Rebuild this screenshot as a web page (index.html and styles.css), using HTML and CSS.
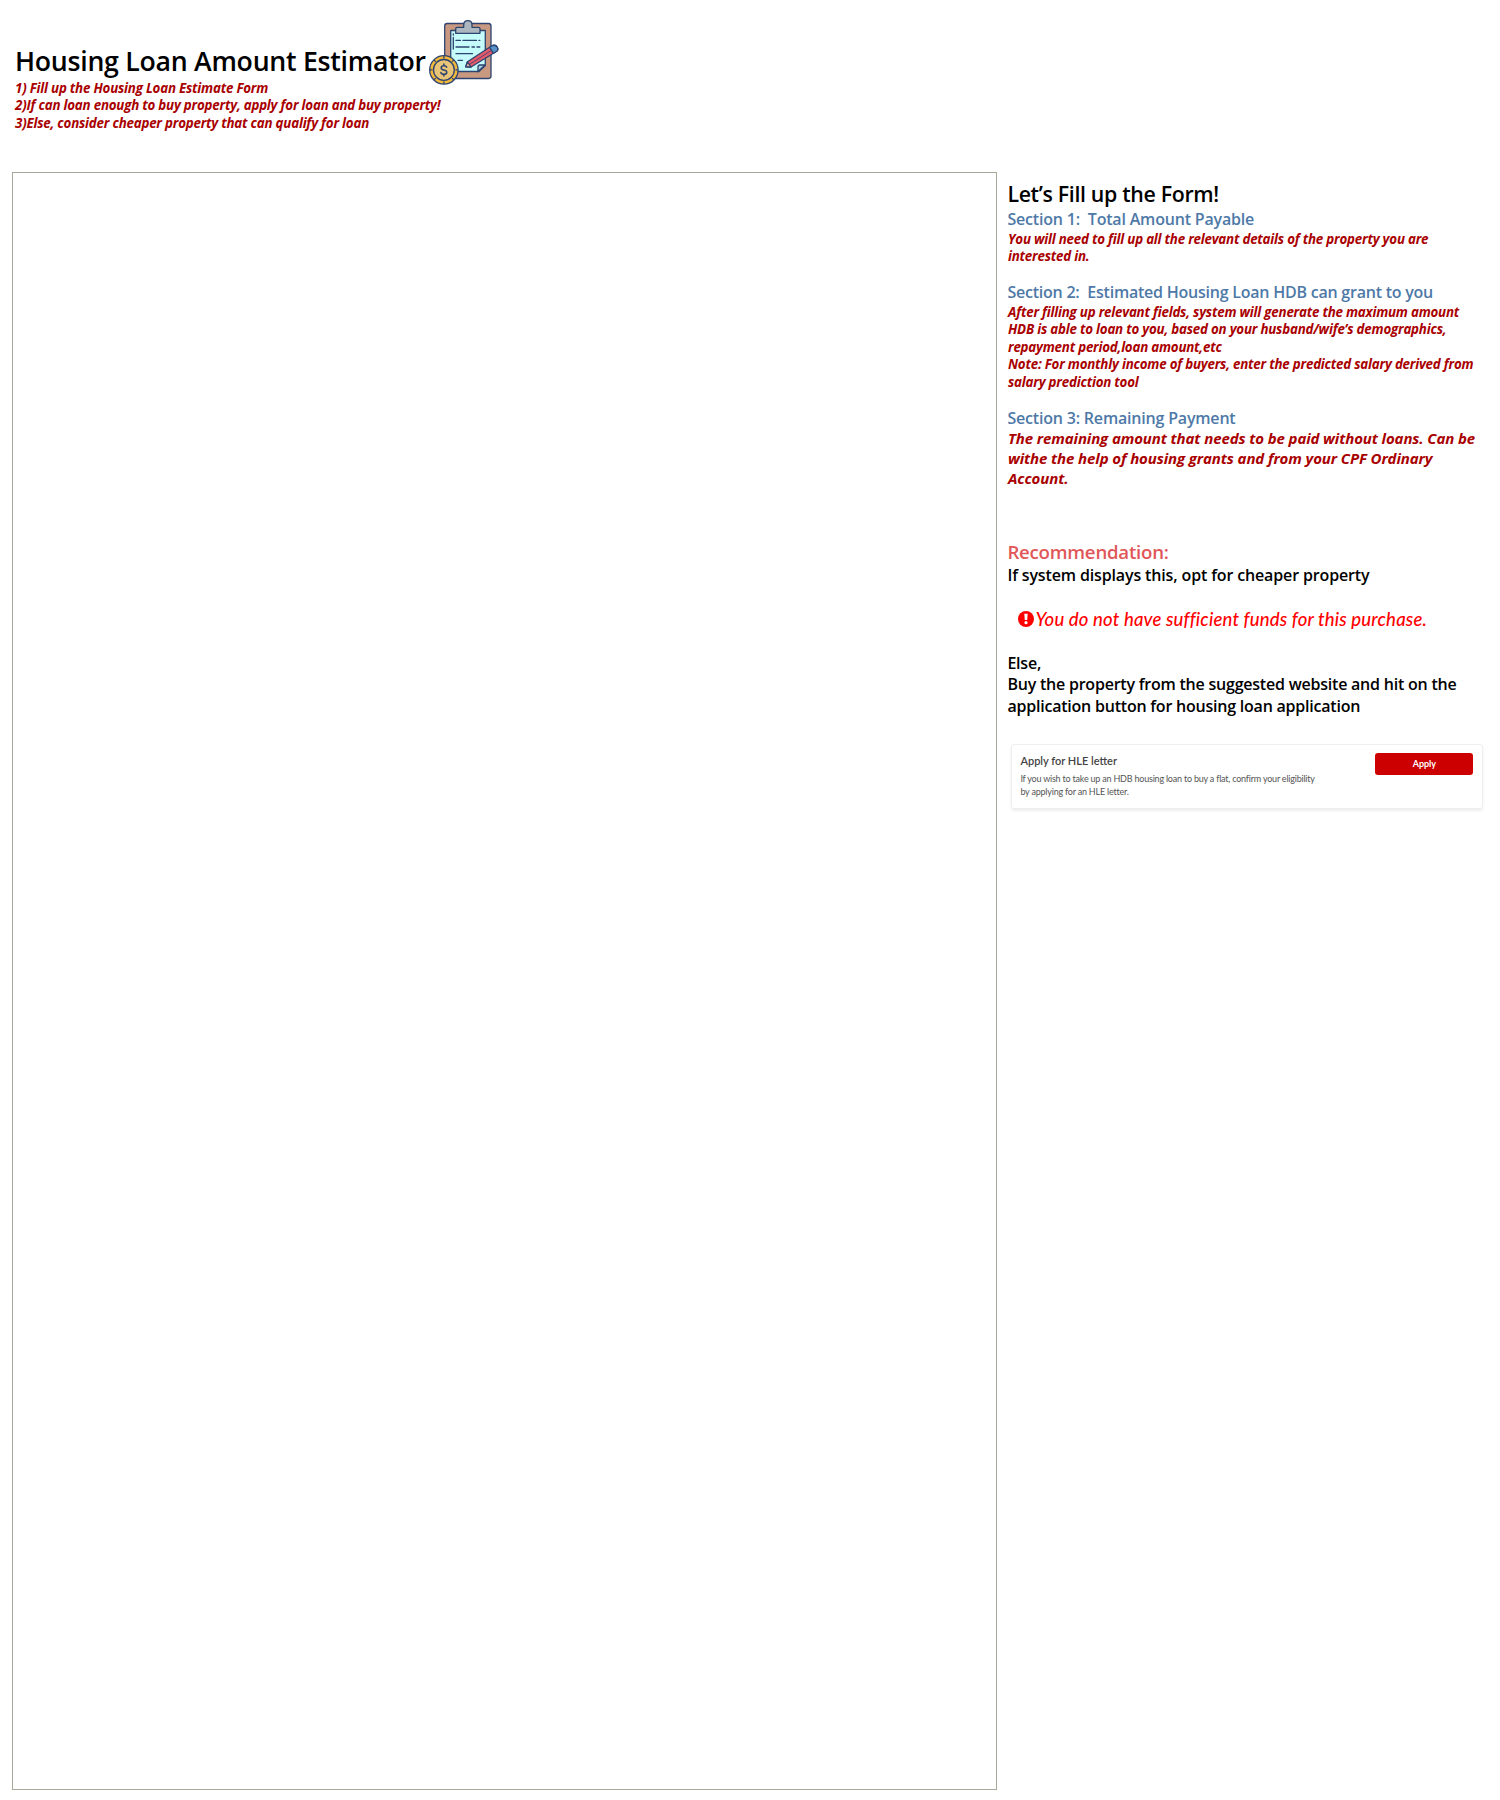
FILE: index.html
```
<!DOCTYPE html>
<html lang="en">
<head>
<meta charset="utf-8">
<title>Housing Loan Amount Estimator</title>
<link rel="stylesheet" href="styles.css">
</head>
<body>
<header class="header">
  <div class="intro">
    <h1 class="title">Housing Loan Amount Estimator</h1>
    <ol class="steps note">
      <li>1) Fill up the Housing Loan Estimate Form</li>
      <li>2)If can loan enough to buy property, apply for loan and buy property!</li>
      <li>3)Else, consider cheaper property that can qualify for loan</li>
    </ol>
  </div>
  <svg class="logo" viewBox="0 0 90 85" width="90" height="85" fill="none" stroke="#2d4470" stroke-width="1.3" stroke-linecap="round" stroke-linejoin="round">
    <rect x="24.7" y="13.5" width="46.3" height="55" rx="2.5" fill="#c99880"/>
    <path d="M30.7 20.5H65.3V55.500L59 61.500H30.700Z" fill="#c5fbfb"/>
    <path d="M58 61.500V57Q58 55 60 55H65.200Z" fill="#a9cfe0"/>
    <path d="M35.700 23.300V18.500Q35.700 17.300 37 17.300H43.700V15Q43.700 10.700 47.900 10.700T52 15V17.300H58.700Q60 17.300 60 18.500V23.300Z" fill="#acb6be"/>
    <path d="M33.300 23.800V25M33.300 27.500V39M36 30.400H40.500M43 30.400H56.500M59 30.400H59.800M36 37H49M52 37H54.500M57 37H59.800M36 43.700H52.500M38 50.300H42.500"/>
    <path d="M45.700 56.800L47.500 51.800L71.500 36Q75.500 34 77.300 37.200T75.500 42L51 57Z" fill="#e4596b"/>
    <path d="M69.600 37.300L71.500 36Q75.500 34 77.300 37.200T75.500 42L73.300 43.300Z" fill="#5793c8"/>
    <path d="M45.700 56.800L47.500 51.800L51 57Z" fill="#e7ae94"/>
    <path d="M49.500 54.400L71.500 40.300" stroke-width="0.8"/>
    <circle cx="23.900" cy="59.900" r="14.200" fill="#f2b83b"/>
    <circle cx="23.900" cy="59.900" r="10.400" fill="#e8c477"/>
    <path d="M23.900 46.500V48M23.900 72V73.500M10.500 59.900H12M36 59.900H37.500M14.400 50.400L15.400 51.400M32.400 68.400L33.400 69.400M14.400 69.400L15.400 68.400M32.400 51.400L33.400 50.400"/>
    <path d="M26.700 57.300Q26.200 55.800 23.900 55.800Q21.200 55.800 21.200 57.900Q21.200 59.500 23.900 59.900Q26.800 60.400 26.800 62.200Q26.800 64.300 23.900 64.300Q21.300 64.300 20.900 62.500M23.900 54V55.800M23.900 64.300V66" stroke-width="1.500"/>
  </svg>
</header>
<main class="content">
  <section class="frame"></section>
  <aside class="guide">
    <h2 class="guide-title">Let’s Fill up the Form!</h2>
    <section class="block">
      <h3 class="section-title">Section 1:&nbsp; Total Amount Payable</h3>
      <p class="note">You will need to fill up all the relevant details of the property you are<br>interested in.</p>
    </section>
    <section class="block">
      <h3 class="section-title tight">Section 2:&nbsp; Estimated Housing Loan HDB can grant to you</h3>
      <p class="note">After filling up relevant fields, system will generate the maximum amount<br>HDB is able to loan to you, based on your husband/wife’s demographics,<br>repayment period,loan amount,etc<br>Note: For monthly income of buyers, enter the predicted salary derived from<br>salary prediction tool</p>
    </section>
    <section class="block">
      <h3 class="section-title">Section 3: Remaining Payment</h3>
      <p class="note large">The remaining amount that needs to be paid without loans. Can be<br>withe the help of housing grants and from your CPF Ordinary<br>Account.</p>
    </section>
    <h2 class="recommendation">Recommendation:</h2>
    <p class="advice first">If system displays this, opt for cheaper property</p>
    <p class="warning">
      <svg width="16" height="16" viewBox="0 0 16 16"><circle cx="8" cy="8" r="8" fill="#f00"/><path d="M6.300 2.800H9.700L9.200 9H6.800Z" fill="#fff"/><circle cx="8" cy="11.700" r="1.600" fill="#fff"/></svg>
      <span>You do not have sufficient funds for this purchase.</span>
    </p>
    <p class="advice">Else,<br>Buy the property from the suggested website and hit on the<br>application button for housing loan application</p>
    <div class="card">
      <div>
        <h4 class="card-title">Apply for HLE letter</h4>
        <p class="card-text">If you wish to take up an HDB housing loan to buy a flat, confirm your eligibility<br>by applying for an HLE letter.</p>
      </div>
      <button class="apply">Apply</button>
    </div>
  </aside>
</main>
</body>
</html>
```
FILE: styles.css
```
* { box-sizing: border-box; margin: 0; padding: 0; }
body {
  height: 1800px;
  background: #fff;
  color: #000;
  font-family: "Open Sans", "Noto Sans", sans-serif;
  font-weight: 600;
  white-space: nowrap;
  overflow: hidden;
}
h1, h2, h3, h4 { font-weight: 600; }
.header { display: flex; height: 172px; padding: 10px 0 0 15px; }
.intro { width: 405px; padding-top: 33px; }
.title { margin-bottom: 0.7px; font-size: 26.7px; line-height: 36px; letter-spacing: -0.27px; }
.steps { list-style: none; }
.note { color: #a90000; font-size: 13.33px; font-style: italic; font-weight: 700; line-height: 17.5px; letter-spacing: -0.21px; }
.logo { flex: none; }
.content { display: flex; padding-left: 12px; }
.frame { flex: none; width: 985px; height: 1618px; border: 1px solid #a9a999; }
.guide { width: 503px; padding: 7px 0 0 10.4px; }
.guide .note { padding-left: 0.6px; }
.guide-title { font-size: 21.33px; line-height: 30px; letter-spacing: -0.33px; }
.block { margin-bottom: 16.5px; }
.section-title { color: #4e79a7; font-size: 16px; line-height: 21.5px; letter-spacing: -0.19px; }
.tight { letter-spacing: -0.23px; }
.note.large { font-size: 15px; line-height: 19.8px; letter-spacing: -0.11px; }
.recommendation { margin-top: 51px; color: #e15759; font-size: 18.67px; line-height: 25.8px; letter-spacing: -0.24px; }
.advice { font-size: 16px; line-height: 21.6px; letter-spacing: -0.22px; }
.advice.first { letter-spacing: -0.14px; }
.warning {
  display: flex; align-items: center; height: 24px; margin: 20px 0 21.9px; padding-left: 11px;
  color: #f00; font: italic 500 18.5px/24px Lato, sans-serif; letter-spacing: 0.17px;
}
.warning svg { margin-right: 1px; }
.card {
  display: flex; justify-content: space-between; align-items: flex-start;
  width: 472px; height: 65px; margin: 27px 0 0 4px; padding: 8px 9px 0 8px;
  border: 1px solid #eee; border-radius: 3px; box-shadow: 0 2px 3px #eee;
  font-family: Lato, sans-serif; color: #444;
}
.card-title { font-size: 11px; line-height: 15px; }
.card-text { margin-top: 4px; color: #555; font-size: 9px; font-weight: 400; line-height: 13px; letter-spacing: -0.21px; }
.apply {
  width: 98px; height: 22px; border: 0; border-radius: 3px; background: #c00; color: #fff;
  font: 700 9px/22px Lato, sans-serif;
}
```
